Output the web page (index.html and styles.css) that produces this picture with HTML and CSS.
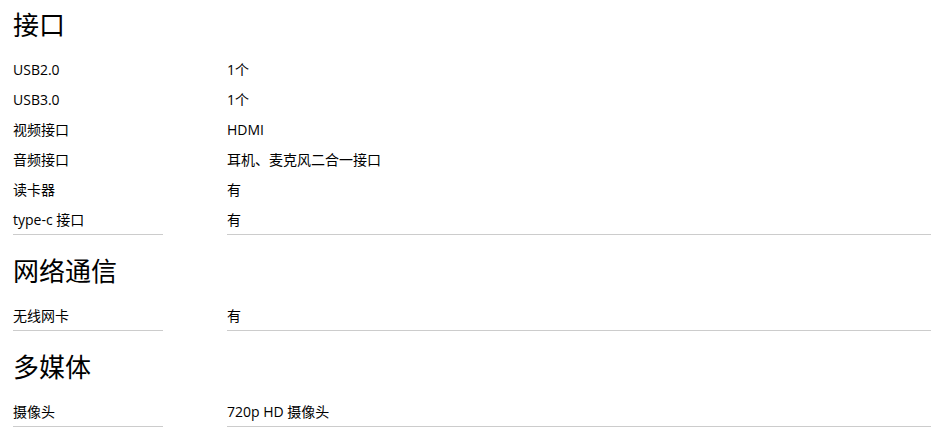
FILE: index.html
```html
<!DOCTYPE html>
<html lang="zh-CN">
<head>
<meta charset="utf-8">
<title>规格</title>
<link rel="stylesheet" href="styles.css">
</head>
<body>
<div class="specs">
  <section class="group first">
    <h2 class="group-title">接口</h2>
    <dl class="spec-list">
      <dt>USB2.0</dt><dd>1个</dd>
      <dt>USB3.0</dt><dd>1个</dd>
      <dt>视频接口</dt><dd>HDMI</dd>
      <dt>音频接口</dt><dd>耳机、麦克风二合一接口</dd>
      <dt>读卡器</dt><dd>有</dd>
      <dt class="last">type-c 接口</dt><dd class="last">有</dd>
    </dl>
  </section>
  <section class="group">
    <h2 class="group-title">网络通信</h2>
    <dl class="spec-list">
      <dt class="last">无线网卡</dt><dd class="last">有</dd>
    </dl>
  </section>
  <section class="group">
    <h2 class="group-title">多媒体</h2>
    <dl class="spec-list">
      <dt class="last">摄像头</dt><dd class="last">720p HD 摄像头</dd>
    </dl>
  </section>
</div>
</body>
</html>
```
FILE: styles.css
```css
html, body {
  margin: 0;
  padding: 0;
  background: #fff;
}
body {
  font-family: "Open Sans", "Noto Sans", "Noto Sans CJK SC", sans-serif;
  color: #000;
}
.specs {
  padding: 0 1px 0 13px;
}
.group-title {
  margin: 17px 0 13px;
  font-size: 26px;
  line-height: 36px;
  font-weight: 400;
  font-family: "Noto Sans CJK SC", sans-serif;
}
.group.first .group-title {
  margin-top: 6px;
}
.spec-list {
  display: grid;
  grid-template-columns: 150px 1fr;
  column-gap: 64px;
  margin: 0;
}
.spec-list dt,
.spec-list dd {
  margin: 0;
  height: 30px;
  line-height: 29px;
  font-size: 14px;
  box-sizing: border-box;
  white-space: nowrap;
}
.spec-list .last {
  border-bottom: 1px solid #cccccc;
}
```
